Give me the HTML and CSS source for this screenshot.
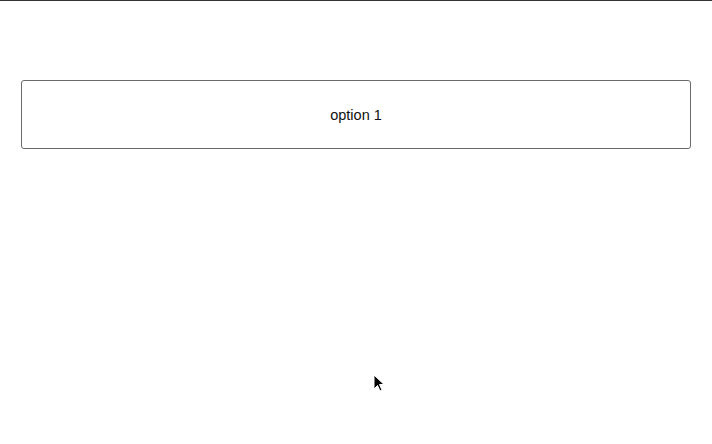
FILE: index.html
```html
<!DOCTYPE html>
<html lang="en">
<head>
  <meta charset="UTF-8">
  <title>Options</title>
  <link rel="stylesheet" href="styles.css">
</head>
<body>
<div class="page">
  <div class="option-list">
    <div class="option-item">option 1</div>
  </div>
</div>

<svg class="cursor" width="14" height="20" viewBox="0 0 14 20">
  <path d="M1 1 L1 15 L4.5 11.5 L7 17 L9 16 L6.5 10.5 L11 10.5 Z" fill="#000" stroke="#fff" stroke-width="1"/>
</svg>
</body>
</html>
```

FILE: styles.css
```css
body {
  margin: 0;
  padding: 0;
  font-family: 'Liberation Sans', Arial, sans-serif;
  background-color: #ffffff;
  border-top: 1px solid #333333;
  min-height: 443px;
}

.page {
  padding: 79px 21px 0 21px;
}

.option-list {
  display: flex;
  flex-direction: column;
  gap: 10px;
}

.option-item {
  height: 67px;
  border: 1px solid #6b6b6b;
  border-radius: 3px;
  display: flex;
  align-items: center;
  justify-content: center;
  font-size: 14.5px;
  color: #111111;
}

.cursor {
  position: absolute;
  left: 373px;
  top: 374px;
}
```
